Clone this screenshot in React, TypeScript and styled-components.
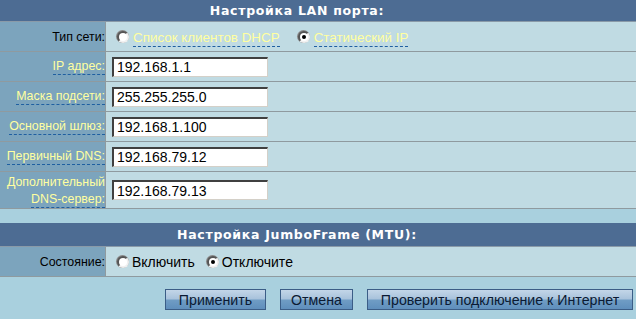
import React from 'react'
import styled, { createGlobalStyle } from 'styled-components'

const GlobalStyle = createGlobalStyle`
  html, body {
    margin: 0;
    padding: 0;
    background: #a9d0de;
    font-family: "Liberation Sans", Arial, sans-serif;
  }
`

const Page = styled.div`
  width: 636px;
  height: 319px;
  display: flex;
  flex-direction: column;
  background: #a9d0de;
`

const Section = styled.div<{ top?: number }>`
  display: flex;
  flex-direction: column;
  margin-top: ${({ top }) => top || 0}px;
`

const Header = styled.div<{ h: number }>`
  height: ${({ h }) => h}px;
  background: #4d6c93;
  border-bottom: 1px solid #8a9aa8;
  color: #fff;
  font-family: "DejaVu Sans", Verdana, sans-serif;
  font-weight: bold;
  font-size: 12.5px;
  letter-spacing: 0.7px;
  display: flex;
  align-items: center;
  justify-content: center;
  padding-right: 42px;
`

const Row = styled.div<{ h?: number }>`
  display: grid;
  grid-template-columns: 106px 1fr;
  height: ${({ h }) => h || 29}px;
  border-bottom: 1px solid #8f9a9f;
`

const LabelCell = styled.div`
  background: #7ca4bd;
  border-right: 1px solid #8f9a9f;
  display: flex;
  flex-direction: column;
  align-items: flex-end;
  justify-content: center;
  font-size: 12.4px;
  line-height: 18px;
  color: #000;
  text-align: right;
`

const Hint = styled.span`
  color: #ffffa0;
  border-bottom: 1px dashed #1f5fa0;
  line-height: 16px;
`

const Plain = styled.span`
  color: #ffffa0;
`

const ValueCell = styled.div<{ radios?: boolean; gap?: number }>`
  background: #c0dbe3;
  display: flex;
  align-items: center;
  padding-left: ${({ radios }) => (radios ? 11 : 6)}px;
  gap: ${({ gap }) => gap || 8}px;
  font-size: 14px;
`

const Field = styled.input`
  box-sizing: border-box;
  width: 156px;
  height: 20px;
  padding: 0 3px;
  margin: 0;
  border-style: solid;
  border-width: 2px 1px 1px 2px;
  border-color: #404040 #d4d0c8 #d4d0c8 #404040;
  background: #fff;
  font-family: "Liberation Sans", Arial, sans-serif;
  font-size: 14px;
  color: #000;
  outline: none;
`

const Choice = styled.label`
  display: flex;
  align-items: center;
  gap: 3px;
  color: #000;
  font-size: 14px;
`

const Dot = styled.span<{ on?: boolean }>`
  position: relative;
  width: 12px;
  height: 12px;
  box-sizing: border-box;
  border-radius: 50%;
  background: #fff;
  border: 2px solid;
  border-color: #555 #f0f0f0 #f0f0f0 #555;
  box-shadow: -0.5px -0.5px 0 0.5px #888;
  &::after {
    content: '';
    display: ${({ on }) => (on ? 'block' : 'none')};
    position: absolute;
    left: 2px;
    top: 2px;
    width: 4px;
    height: 4px;
    border-radius: 50%;
    background: #000;
  }
`

const LinkText = styled.span`
  color: #ffffa0;
  border-bottom: 1px dashed #1f5fa0;
  line-height: 17px;
  margin-top: 3px;
  margin-left: 1px;
  font-size: 13.4px;
`

const Buttons = styled.div`
  display: flex;
  justify-content: flex-end;
  gap: 14px;
  margin-top: 12px;
  padding-right: 3px;
`

const Btn = styled.button<{ w: number }>`
  width: ${({ w }) => w}px;
  height: 21px;
  padding: 0;
  border: 1px solid #3b5d86;
  background: linear-gradient(#c3d6e8 0%, #a9c3dc 45%, #6f9cc4 55%, #5f8fbc 100%);
  color: #0b1a33;
  font-family: "Liberation Sans", Arial, sans-serif;
  font-size: 14.2px;
  cursor: pointer;
`

const fields = [
  { label: 'IP адрес:', value: '192.168.1.1' },
  { label: 'Маска подсети:', value: '255.255.255.0' },
  { label: 'Основной шлюз:', value: '192.168.1.100' },
  { label: 'Первичный DNS:', value: '192.168.79.12' },
]

export default function App() {
  return (
    <Page>
      <GlobalStyle />
      <Section>
        <Header h={21}>Настройка LAN порта:</Header>
        <Row>
          <LabelCell>Тип сети:</LabelCell>
          <ValueCell radios gap={18}>
            <Choice>
              <Dot />
              <LinkText>Список клиентов DHCP</LinkText>
            </Choice>
            <Choice>
              <Dot on />
              <LinkText>Статический IP</LinkText>
            </Choice>
          </ValueCell>
        </Row>
        {fields.map((f) => (
          <Row key={f.label}>
            <LabelCell>
              <Hint>{f.label}</Hint>
            </LabelCell>
            <ValueCell>
              <Field defaultValue={f.value} />
            </ValueCell>
          </Row>
        ))}
        <Row h={36}>
          <LabelCell>
            <Plain>Дополнительный</Plain>
            <Hint>DNS-сервер:</Hint>
          </LabelCell>
          <ValueCell>
            <Field defaultValue="192.168.79.13" />
          </ValueCell>
        </Row>
      </Section>
      <Section top={14}>
        <Header h={23}>Настройка JumboFrame (MTU):</Header>
        <Row>
          <LabelCell>Состояние:</LabelCell>
          <ValueCell radios gap={12}>
            <Choice>
              <Dot />
              Включить
            </Choice>
            <Choice>
              <Dot on />
              Отключите
            </Choice>
          </ValueCell>
        </Row>
      </Section>
      <Buttons>
        <Btn w={101}>Применить</Btn>
        <Btn w={73}>Отмена</Btn>
        <Btn w={266}>Проверить подключение к Интернет</Btn>
      </Buttons>
    </Page>
  )
}
